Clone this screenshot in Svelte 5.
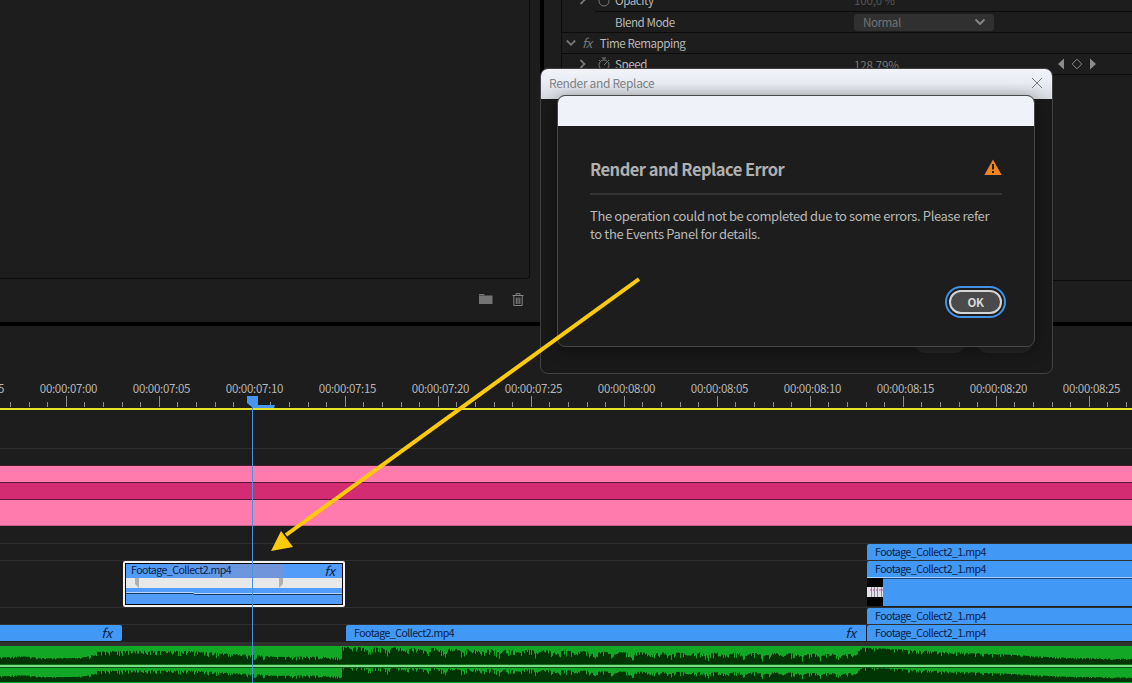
<script lang="ts">
  const labels = ['06:25', '07:00', '07:05', '07:10', '07:15', '07:20', '07:25', '08:00', '08:05', '08:10', '08:15', '08:20', '08:25'];
  const ticks = Array.from({ length: 62 }, (_, i) => ({
    x: Math.round(10.5 + i * 18.6 - 0.5),
    major: i % 5 === 3
  }));

  // audio level (0..1) at a few places along the clip: x, level, roughness
  const levels = [
    [0, 0.3, 0.1], [20, 0.38, 0.1], [45, 0.26, 0.1], [80, 0.27, 0.1], [90, 0.4, 0.25], [97, 0.62, 0.25],
    [130, 0.68, 0.3], [190, 0.66, 0.3], [235, 0.5, 0.3], [280, 0.34, 0.25], [320, 0.36, 0.2], [341, 0.28, 0.15],
    [342, 0.9, 0.35], [420, 0.84, 0.4], [500, 0.76, 0.4], [560, 0.7, 0.35], [620, 0.6, 0.3], [700, 0.58, 0.35],
    [780, 0.55, 0.35], [854, 0.5, 0.3], [862, 0.86, 0.25], [890, 0.78, 0.25], [950, 0.6, 0.25],
    [1010, 0.46, 0.18], [1060, 0.3, 0.1], [1132, 0.22, 0.08]
  ];

  function noise(n: number): number {
    const v = Math.sin(n * 12.9898) * 43758.5453;
    return v - Math.floor(v);
  }

  function waveform(height: number, boost: number): string {
    let d = `M0 ${height}`;
    let k = 0;
    for (let x = 0; x <= 1132; x++) {
      while (k < levels.length - 2 && levels[k + 1][0] <= x) k++;
      const [x0, a0, r0] = levels[k];
      const [x1, a1, r1] = levels[k + 1];
      const t = (x - x0) / (x1 - x0);
      const rough = r0 + (r1 - r0) * t;
      let level = (a0 + (a1 - a0) * t) * boost - rough * Math.pow(noise(x), 3);
      if (x > 350 && x < 858) level -= 0.16 * Math.pow(Math.abs(Math.sin(x / 6)), 4);
      const y = height * (1 - Math.min(1, Math.max(0.1, level + 0.06)));
      d += `V${y.toFixed(1)}H${x + 1}`;
    }
    return d + `V${height}Z`;
  }
</script>

<div class="app">
  <div class="panels">
    <div class="project">
      <div class="bin"></div>
      <div class="tools">
        <svg width="14" height="12" viewBox="0 0 14 12"><path d="M0 1h5l1 1.5h7.5V11H0z" fill="#747474" /><path d="M0 2.5h6" stroke="#555" /></svg>
        <svg width="12" height="13" viewBox="0 0 12 13" fill="none" stroke="#858585"><path d="M.5 2.5h11M4 2V.7h4V2M1.8 3v9.5h8.4V3M4.3 4.5v6.5M6 4.5v6.5M7.8 4.5v6.5" /></svg>
      </div>
    </div>
    <div class="effects">
      <div class="props">
        <div class="prop cut">
          <svg class="twirl" width="8" height="10" viewBox="0 0 8 10"><path d="M1.5 1l4 4-4 4" /></svg>
          <svg class="watch" width="12" height="14" viewBox="0 0 12 14"><circle cx="6" cy="8" r="5" /></svg>
          <span>Opacity</span>
          <span class="value dim">100,0 %</span>
        </div>
        <div class="prop blend">
          <span>Blend Mode</span>
          <div class="select">Normal
            <svg width="12" height="8" viewBox="0 0 12 8"><path d="M1.5 1.5L6 6l4.500-4.500" fill="none" stroke="#888" stroke-width="1.800" /></svg>
          </div>
        </div>
        <div class="prop group">
          <svg class="twirl" width="10" height="8" viewBox="0 0 10 8"><path d="M.8 1.500L5 5.800 9.200 1.500" /></svg>
          <i>fx</i>
          <span>Time Remapping</span>
        </div>
        <div class="prop speed">
          <svg class="twirl" width="8" height="10" viewBox="0 0 8 10"><path d="M1.5 1l4 4-4 4" /></svg>
          <svg class="watch" width="12" height="14" viewBox="0 0 12 14"><circle cx="6" cy="8" r="5" /><path d="M4 1h4M6 1v2M6 8l3-3M1 3l1.500 1.500M11 3L9.500 4.500" /></svg>
          <span>Speed</span>
          <span class="value">128,79%</span>
          <svg class="keys" width="40" height="12" viewBox="0 0 40 12"><path d="M7 .5v11L1 6zM33 .5v11L39 6z" fill="#8a8a8a" /><path d="M20 1.200L24.800 6 20 10.800 15.200 6z" fill="none" stroke="#8a8a8a" /></svg>
        </div>
      </div>
      <div class="rest"></div>
    </div>
  </div>

  <div class="timeline">
    <div class="ruler">
      <div class="labels">
        {#each labels as label}
          <span>00:00:{label}</span>
        {/each}
      </div>
      <svg width="1132" height="12" viewBox="0 0 1132 12" shape-rendering="crispEdges">
        {#each ticks as tick}
          <rect x={tick.x} y={tick.major ? 0 : 6} width="1" height={tick.major ? 11 : 5} fill="#8f8f8f" />
        {/each}
      </svg>
    </div>

    <div class="track tall"></div>
    <div class="track gap"></div>
    <div class="pink"></div>
    <div class="pink deep"></div>
    <div class="pink low"></div>
    <div class="track"></div>
    <div class="track short"><div class="clip end">Footage_Collect2_1.mp4</div></div>
    <div class="track video">
      <div class="selected">
        <div class="clip-name"><span>Footage_Collect2.mp4</span><i>fx</i></div>
        <div class="band"><b></b><b></b></div>
        <svg width="216" height="17" viewBox="0 0 216 17"><path d="M0 5.500h67l2 1h147" fill="none" stroke="#17365f" /><path d="M0 4.500h67l2 1h147" fill="none" stroke="#b5d7ff" /></svg>
      </div>
      <div class="expanded">
        <div class="clip">Footage_Collect2_1.mp4</div>
        <div class="body">
          <div class="thumb"><svg width="16" height="10" viewBox="0 0 16 10"><path d="M0 0h16v10H0z" fill="#e1e1e8" /><path d="M4.500 0v10M7.500 0v10M10.500 0v10M14.500 0v10" stroke="#8b8d9b" /><path d="M3 3h13" stroke="#bd4f96" stroke-dasharray="2 1" /></svg></div>
        </div>
      </div>
    </div>
    <div class="track short"><div class="clip end">Footage_Collect2_1.mp4</div></div>
    <div class="track bottom">
      <div class="clip first"><i>fx</i></div>
      <div class="clip middle">Footage_Collect2.mp4<i>fx</i></div>
      <div class="clip end">Footage_Collect2_1.mp4</div>
    </div>
    <div class="audio">
      <svg width="1132" height="18" viewBox="0 0 1132 18"><path d={waveform(18, 1)} fill="#013504" /></svg>
      <div class="gain"></div>
      <svg width="1132" height="14" viewBox="0 0 1132 14"><path d={waveform(14, 1.15)} fill="#013504" /></svg>
    </div>

    <svg class="playhead" width="30" height="288" viewBox="0 0 30 288">
      <path d="M0 1h11v9h17l-1 3H6L0 8z" fill="#4496ee" />
      <path d="M5.500 10v278" stroke="#4a92dc" />
    </svg>
  </div>

  <div class="window">
    <div class="titlebar">Render and Replace
      <svg width="12" height="12" viewBox="0 0 12 12"><path d="M1 1l10 10M11 1L1 11" stroke="#76777c" /></svg>
    </div>
    <div class="hidden-buttons"><span></span><span></span></div>
  </div>

  <div class="error">
    <div class="error-bar"></div>
    <div class="error-body">
      <div class="heading">
        <h2>Render and Replace Error</h2>
        <svg width="18" height="16" viewBox="0 0 18 16"><path d="M9 .5L17.700 16H.3z" fill="#ee8521" stroke-linejoin="round" /><path d="M9 5v5.500M9 12v2" stroke="#222" stroke-width="2" /></svg>
      </div>
      <p>The operation could not be completed due to some errors. Please refer<br />to the Events Panel for details.</p>
      <button>OK</button>
    </div>
  </div>

  <svg class="arrow" width="380" height="284" viewBox="0 0 380 284">
    <path d="M379 9L26 265" stroke="#fdcb0c" stroke-width="4" />
    <path d="M11 281l10-20 12 16z" fill="#fdcb0c" />
  </svg>
</div>

<style>
  :global(body) {
    margin: 0;
    background: #1d1d1d;
  }
  .app {
    position: relative;
    width: 1132px;
    height: 683px;
    overflow: hidden;
    background: #1d1d1d;
    color: #b8b8b8;
    font: 12px/16px "Noto Sans CJK SC", "Open Sans", sans-serif;
  }
  svg {
    display: block;
    flex: none;
  }
  span, i {
    white-space: nowrap;
  }
  .panels {
    display: flex;
    height: 322px;
    border-bottom: 4px solid #000;
  }
  .project {
    width: 540px;
  }
  .bin {
    width: 529px;
    height: 278px;
    border-right: 1px solid #0c0c0c;
    border-bottom: 1px solid #0c0c0c;
    border-bottom-right-radius: 4px;
  }
  .tools {
    display: flex;
    justify-content: flex-end;
    gap: 19px;
    padding: 14px 16px 0 0;
  }
  .effects {
    flex: 1;
    border-left: 4px solid #000;
  }
  .props {
    margin-left: 17px;
    height: 72px;
    border-left: 1px solid #0c0c0c;
    letter-spacing: -0.45px;
    font-size: 11.6px;
  }
  .prop {
    display: flex;
    align-items: center;
    box-sizing: border-box;
    height: 21px;
    border-bottom: 1px solid #0c0c0c;
    padding-left: 17px;
    position: relative;
  }
  .prop.cut {
    height: 10px;
    padding-bottom: 11px;
    margin-left: 33px;
    padding-left: 0;
  }
  .cut .twirl {
    margin-left: -16px;
  }
  .prop.blend {
    padding-left: 53px;
  }
  .prop.group {
    padding-left: 4px;
  }
  .group i {
    margin: 0 8px 0 6px;
    color: #777;
    font-size: 13px;
  }
  .twirl, .watch {
    fill: none;
    stroke: #777;
    stroke-width: 1.8;
  }
  .twirl + .watch {
    margin: 0 5px 0 11px;
    stroke-width: 1;
  }
  .value {
    position: absolute;
    left: 292px;
    top: 3px;
    color: #777;
    letter-spacing: -0.2px;
  }
  .cut .value {
    left: 259px;
    top: -8px;
  }
  .value.dim {
    color: #555;
  }
  .keys {
    position: absolute;
    left: 495px;
    top: 4px;
  }
  .props > .prop:not(.cut) > span:not(.value) {
    margin-top: -1px;
  }
  .select {
    display: flex;
    justify-content: space-between;
    align-items: center;
    box-sizing: border-box;
    width: 140px;
    height: 17px;
    margin-left: auto;
    margin-right: 138px;
    padding: 0 8px 0 9px;
    border-radius: 3px;
    background: #303030;
    color: #737373;
  }
  .rest {
    height: 208px;
    border-bottom: 1px solid #0c0c0c;
  }
  .timeline {
    position: relative;
    height: 357px;
  }
  .ruler {
    box-sizing: border-box;
    height: 84px;
    padding-top: 54px;
    border-bottom: 2px solid #e6e228;
  }
  .labels {
    display: flex;
    height: 16px;
    margin-left: -71px;
  }
  .labels span {
    flex: none;
    width: 93px;
    text-align: center;
    font-size: 11.5px;
    letter-spacing: -0.3px;
  }
  .track {
    display: flex;
    box-sizing: border-box;
    height: 18px;
    border-bottom: 1px solid #303030;
  }
  .track.tall {
    height: 39px;
  }
  .track.gap {
    height: 17px;
    border-bottom-color: #451f2f;
  }
  .track.short {
    height: 17px;
  }
  .pink {
    box-sizing: border-box;
    height: 17px;
    background: #ff7bad;
    border-bottom: 1px solid #5a1636;
  }
  .pink.deep {
    background: #d32c73;
  }
  .pink.low {
    height: 26px;
    border-bottom-color: #c95f8a;
  }
  .clip {
    box-sizing: border-box;
    height: 16px;
    padding-left: 8px;
    border-radius: 2px 0 0 0;
    background: #4198f5;
    color: #0b2145;
    font-size: 10.6px;
    letter-spacing: -0.55px;
    line-height: 15px;
  }
  .clip.end {
    width: 265px;
    margin-left: auto;
  }
  .video {
    height: 47px;
  }
  .selected {
    width: 216px;
    height: 40px;
    margin: 0 0 0 123px;
    border: 2px solid #f4f4f4;
    border-radius: 2px;
    outline: 1px solid #000;
    outline-offset: -3px;
    padding: 1px;
    color: #0b2145;
    font-size: 10.6px;
    letter-spacing: -0.55px;
    background: #509cf8;
  }
  .clip-name {
    display: flex;
    justify-content: space-between;
    height: 14px;
    padding: 0 7px 0 5px;
    line-height: 11px;
    background: linear-gradient(90deg, #509cf8 10%, #7095da 60%, #7095da 73%, #509cf8 73%);
  }
  .clip-name i {
    font-size: 13px;
    line-height: 13px;
    letter-spacing: 0;
  }
  .band {
    display: flex;
    justify-content: space-between;
    height: 10px;
    padding: 0 59px 0 9px;
    background: #e8e8e8;
  }
  .band b {
    width: 4px;
    background: #b0b0b0;
    clip-path: polygon(0 0, 100% 0, 100% 100%, 0 60%);
  }
  .band b + b {
    clip-path: polygon(0 0, 100% 0, 100% 60%, 0 100%);
  }
  .expanded {
    width: 265px;
    margin-left: auto;
  }
  .body {
    height: 28px;
    border-top: 1px solid #a8cdf6;
    background: #4198f5;
    box-shadow: inset 0 1px #1d477b;
  }
  .thumb {
    width: 16px;
    height: 19px;
    padding-top: 9px;
    background: #000;
  }
  .bottom {
    height: 17px;
    border: 0;
  }
  .clip.first {
    width: 122px;
    border-radius: 0 2px 2px 0;
    padding-right: 10px;
    text-align: right;
  }
  .clip.middle {
    display: flex;
    justify-content: space-between;
    width: 520px;
    margin-left: 224px;
    padding-right: 10px;
  }
  .clip i {
    font-size: 13px;
    line-height: 16px;
    letter-spacing: 0;
  }
  .audio {
    height: 37px;
    margin-top: 4px;
    background: #12a825;
    box-shadow: 0 -4px #303030;
  }
  .gain {
    height: 2px;
    border-top: 1px solid #0f6c1a;
    border-bottom: 1px solid #0b5214;
    background: #7bdd83;
  }
  .playhead {
    position: absolute;
    left: 247px;
    top: 69px;
  }
  .window {
    position: absolute;
    left: 540px;
    top: 68px;
    box-sizing: border-box;
    width: 513px;
    height: 306px;
    border: 1px solid #414141;
    border-radius: 8px;
    background: #191919;
    overflow: hidden;
  }
  .titlebar {
    display: flex;
    justify-content: space-between;
    height: 24px;
    padding: 6px 9px 0 8px;
    background: linear-gradient(#f1f3f8, #e9ecf3 45%, #d5d8dd);
    color: #818286;
    letter-spacing: -0.33px;
    line-height: 16px;
  }
  .titlebar svg {
    margin-top: 2px;
  }
  .hidden-buttons {
    display: flex;
    gap: 10px;
    padding: 230px 0 0 373px;
  }
  .hidden-buttons span {
    width: 52px;
    height: 24px;
    border-radius: 12px;
    background: #262626;
  }
  .hidden-buttons span + span {
    width: 57px;
  }
  .error {
    position: absolute;
    left: 557px;
    top: 95px;
    box-sizing: border-box;
    width: 478px;
    height: 252px;
    border: 1px solid #494949;
    border-radius: 8px;
    background: #1d1d1d;
    overflow: hidden;
    box-shadow: 0 3px 16px #0006;
  }
  .error-bar {
    height: 30px;
    background: #eff2f9;
  }
  .error-body {
    padding: 32px 32px 0;
  }
  .heading {
    display: flex;
    justify-content: space-between;
    height: 35px;
    border-bottom: 2px solid #333;
  }
  .heading svg {
    margin-top: 1px;
  }
  h2 {
    margin: 0;
    font-size: 16.5px;
    line-height: 23px;
    letter-spacing: -0.52px;
    color: #b0b0b0;
    white-space: nowrap;
  }
  p {
    margin: 12px 0 0;
    font-size: 13px;
    line-height: 18px;
    letter-spacing: -0.38px;
    white-space: nowrap;
  }
  button {
    display: block;
    box-sizing: border-box;
    width: 53px;
    height: 24px;
    margin: 47px 0 0 auto;
    padding: 0;
    border: 2px solid #d5d5d5;
    border-radius: 12px;
    outline: 2px solid #4293e8;
    outline-offset: 2px;
    background: #4a4a4a;
    color: #d8d8d8;
    font: bold 11.5px/18px "Noto Sans CJK SC", sans-serif;
    letter-spacing: -0.3px;
  }
  .arrow {
    position: absolute;
    left: 260px;
    top: 270px;
  }
</style>
